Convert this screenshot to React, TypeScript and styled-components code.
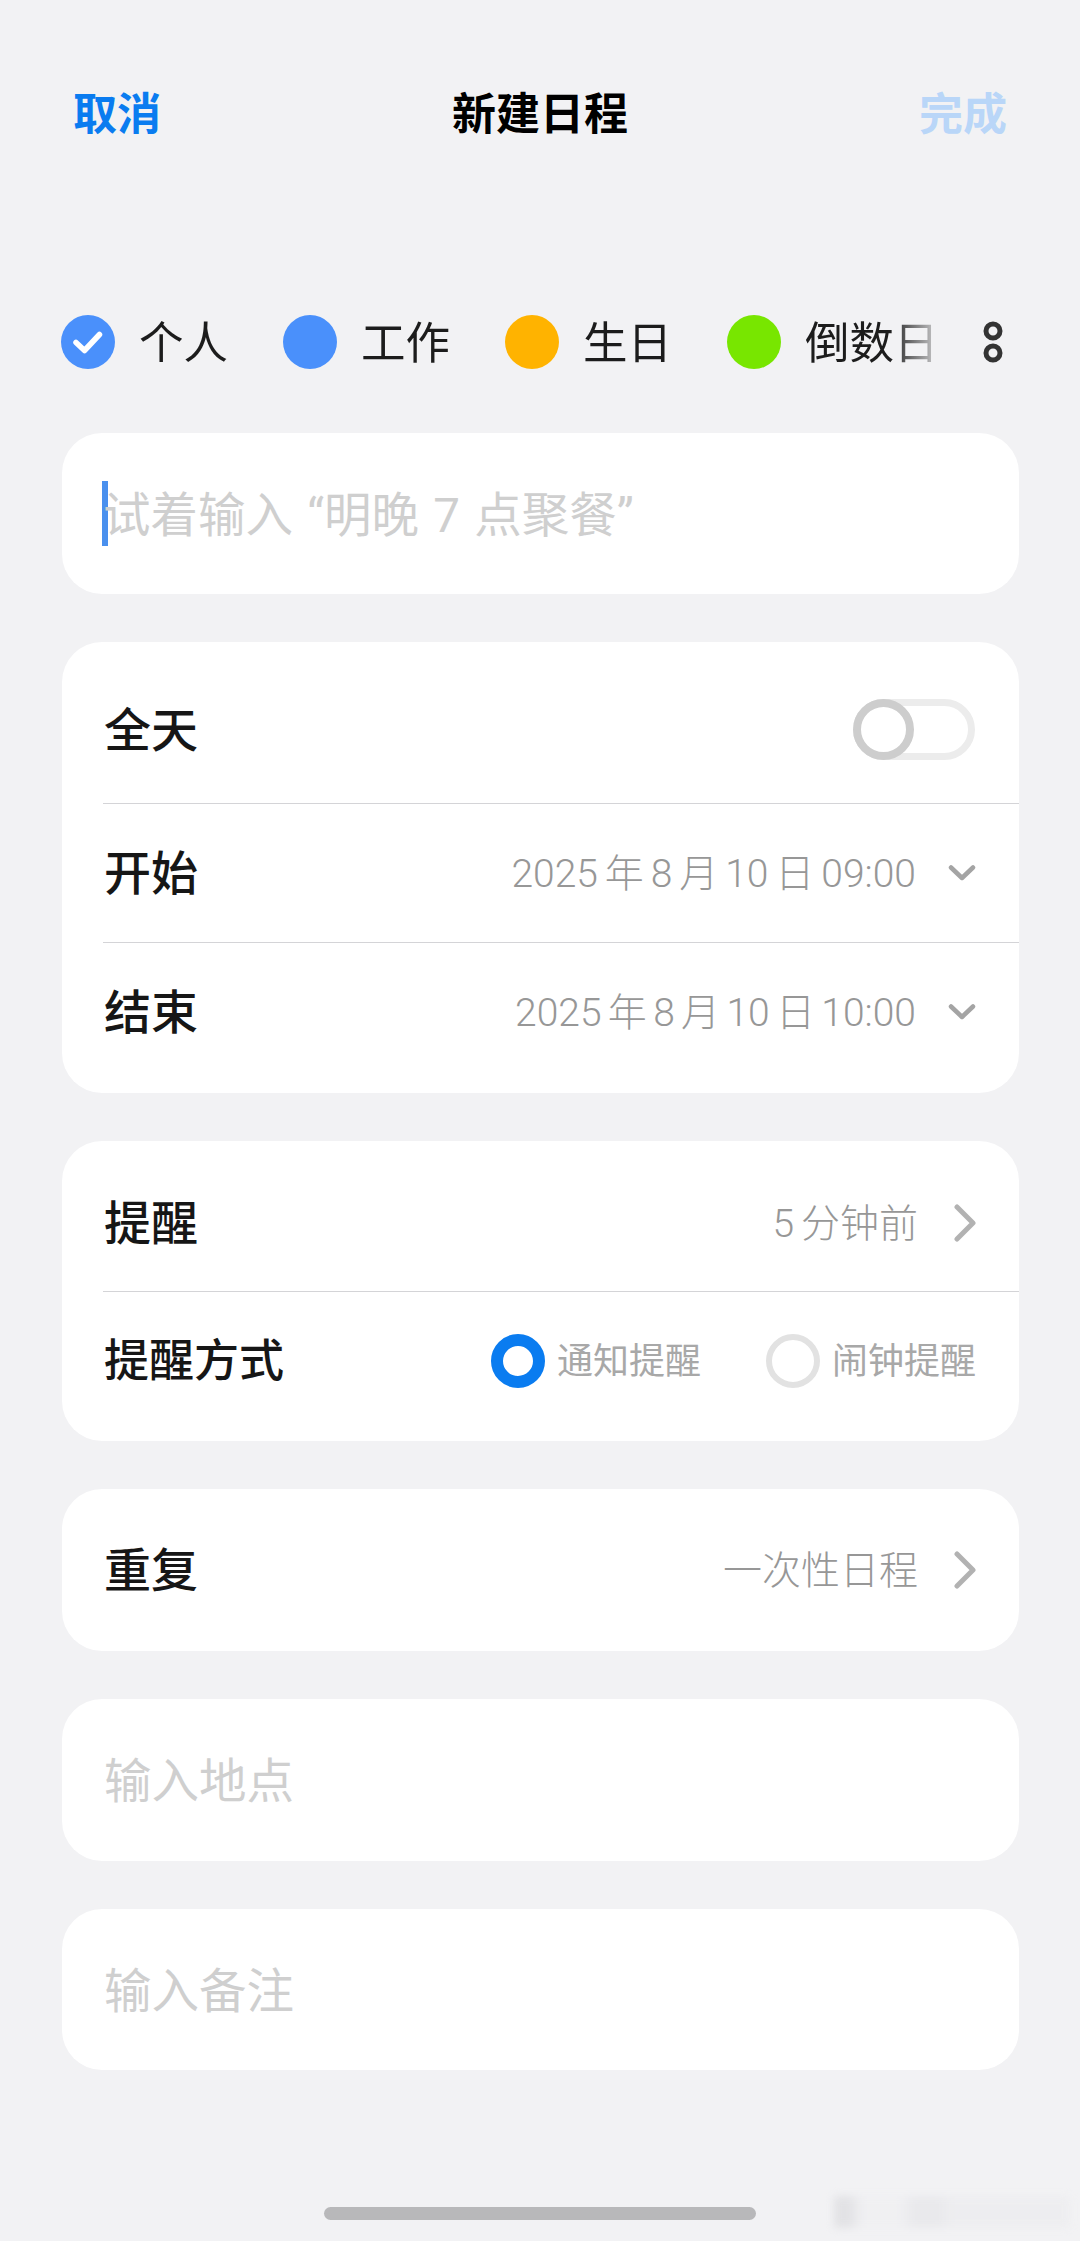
import React from 'react';
import styled, { createGlobalStyle } from 'styled-components';

const GlobalStyle = createGlobalStyle`
  html, body {
    margin: 0;
    padding: 0;
    background: #f2f2f4;
  }
  * {
    box-sizing: border-box;
  }
`;

const FONT = `Roboto, "Noto Sans CJK SC", sans-serif`;

const Page = styled.div`
  position: relative;
  width: 1080px;
  height: 2241px;
  overflow: hidden;
  padding: 85px 61px 0 62px;
  background: #f2f2f4;
  font-family: ${FONT};
  color: #161616;
`;

const Header = styled.header`
  display: flex;
  align-items: center;
  justify-content: space-between;
  height: 56px;
  padding: 0 12px 0 11px;
`;

const HeaderAction = styled.span<{ $muted?: boolean }>`
  padding-top: 3px;
  font-size: 44px;
  line-height: 56px;
  font-weight: 700;
  color: ${(p) => (p.$muted ? '#b9d6f8' : '#0a7cf0')};
`;

const Title = styled.h1`
  margin: 0;
  padding-top: 3px;
  font-size: 44px;
  line-height: 56px;
  font-weight: 700;
  color: #000;
`;

const Categories = styled.div`
  display: flex;
  align-items: center;
  justify-content: space-between;
  height: 54px;
  margin-top: 174px;
  margin-bottom: 64px;
`;

const ChipScroller = styled.div`
  display: flex;
  gap: 55px;
  width: 880px;
  margin-left: -1px;
  overflow: hidden;
  -webkit-mask-image: linear-gradient(to right, #000 828px, rgba(0, 0, 0, 0.25) 872px);
  mask-image: linear-gradient(to right, #000 828px, rgba(0, 0, 0, 0.25) 872px);
`;

const Chip = styled.div`
  display: flex;
  flex: none;
  align-items: center;
  gap: 24px;
`;

const Dot = styled.span<{ $color: string }>`
  display: flex;
  flex: none;
  width: 54px;
  height: 54px;
  border-radius: 50%;
  background: ${(p) => p.$color};
`;

const ChipLabel = styled.span`
  padding-top: 4px;
  font-size: 44.5px;
  line-height: 54px;
  white-space: nowrap;
  color: #1c1c1c;
`;

const MoreIcon = styled.svg`
  flex: none;
  width: 20px;
  height: 42px;
  margin-right: 16px;
`;

const Stack = styled.div`
  display: flex;
  flex-direction: column;
  gap: 48px;
`;

const Card = styled.section`
  overflow: hidden;
  border-radius: 40px;
  background: #fff;
`;

const Row = styled.div<{ $h: number; $top?: number; $bottom?: number; $line?: boolean }>`
  display: flex;
  align-items: center;
  justify-content: space-between;
  height: ${(p) => p.$h}px;
  margin-left: 41px;
  padding: ${(p) => p.$top ?? 0}px 43px ${(p) => p.$bottom ?? 0}px 1px;
  border-top: ${(p) => (p.$line ? '1px solid #d4d4d7' : 'none')};
`;

const Label = styled.span<{ $small?: boolean }>`
  padding-top: 2px;
  font-size: ${(p) => (p.$small ? 45 : 47)}px;
  line-height: 60px;
  font-weight: 500;
  color: #161616;
`;

const Placeholder = styled.span`
  display: flex;
  align-items: center;
  font-size: 47.5px;
  line-height: 60px;
  word-spacing: 2.5px;
  white-space: pre;
  color: #cfcfcf;
`;

const PlaceholderText = styled.span`
  padding-top: 4px;
`;

const Caret = styled.span`
  flex: none;
  width: 6px;
  height: 65px;
  margin-left: -2px;
  margin-right: -5px;
  background: #4a90ee;
`;

const Value = styled.div`
  display: flex;
  align-items: center;
`;

const ValueText = styled.span<{ $tight?: boolean }>`
  padding-top: 2px;
  font-size: 39px;
  line-height: 56px;
  font-weight: 300;
  word-spacing: ${(p) => (p.$tight ? -3.2 : -2.6)}px;
  white-space: nowrap;
  color: #979797;
`;

const ChevronDown = styled.svg`
  flex: none;
  width: 28px;
  height: 18px;
  margin-left: 32px;
`;

const ChevronRight = styled.svg`
  flex: none;
  width: 22px;
  height: 38px;
  margin-left: 36px;
`;

const Toggle = styled.span`
  position: relative;
  display: block;
  width: 122px;
  height: 61px;
  margin-right: 1px;
  border: 7px solid #ececec;
  border-radius: 31px;
`;

const Thumb = styled.span`
  position: absolute;
  top: -7px;
  left: -7px;
  width: 61px;
  height: 61px;
  border: 8px solid #cdcdcd;
  border-radius: 50%;
  background: #fff;
`;

const RadioGroup = styled.div`
  display: flex;
  align-items: center;
  gap: 65px;
`;

const RadioOption = styled.div`
  display: flex;
  align-items: center;
  gap: 12px;
`;

const RadioMark = styled.span<{ $on?: boolean }>`
  flex: none;
  width: 54px;
  height: 54px;
  border-radius: 50%;
  border: ${(p) => (p.$on ? '12px solid #0a7cf0' : '6px solid #e2e2e2')};
`;

const RadioLabel = styled.span`
  padding-top: 3px;
  font-size: 36px;
  line-height: 50px;
  white-space: nowrap;
  color: #a8a8a8;
`;

const HomeBar = styled.div`
  position: absolute;
  left: 324px;
  top: 2207px;
  width: 432px;
  height: 13px;
  border-radius: 7px;
  background: #b8b8ba;
`;

const Watermark = styled.div`
  position: absolute;
  left: 834px;
  top: 2196px;
  width: 236px;
  height: 32px;
  opacity: 0.45;
  filter: blur(4px);
  background: linear-gradient(to right, #cfcfd3 0 6%, #eeeef1 12% 28%, #dfdfe3 34% 44%, #e9e9ec 50% 100%);
`;

const categories = [
  { name: '个人', color: '#4a90fb', checked: true },
  { name: '工作', color: '#4a90fb' },
  { name: '生日', color: '#ffb300' },
  { name: '倒数日', color: '#78e600' },
];

const Down = () => (
  <ChevronDown viewBox="0 0 28 18">
    <path d="M3 3.5 L14 14 L25 3.5" fill="none" stroke="#a4a4a4" strokeWidth="4.5" strokeLinecap="round" strokeLinejoin="round" />
  </ChevronDown>
);

const Right = () => (
  <ChevronRight viewBox="0 0 22 38">
    <path d="M3 3 L19 19 L3 35" fill="none" stroke="#b2b2b2" strokeWidth="5" strokeLinecap="round" strokeLinejoin="round" />
  </ChevronRight>
);

export default function App() {
  return (
    <Page>
      <GlobalStyle />
      <Header>
        <HeaderAction>取消</HeaderAction>
        <Title>新建日程</Title>
        <HeaderAction $muted>完成</HeaderAction>
      </Header>

      <Categories>
        <ChipScroller>
          {categories.map((c) => (
            <Chip key={c.name}>
              <Dot $color={c.color}>
                {c.checked && (
                  <svg width="54" height="54" viewBox="0 0 54 54">
                    <path d="M15 27.5 L23.5 35.5 L38.5 19.5" fill="none" stroke="#fff" strokeWidth="5.5" strokeLinecap="round" strokeLinejoin="round" />
                  </svg>
                )}
              </Dot>
              <ChipLabel>{c.name}</ChipLabel>
            </Chip>
          ))}
        </ChipScroller>
        <MoreIcon viewBox="0 0 20 42">
          <circle cx="10" cy="10" r="7" fill="none" stroke="#333" strokeWidth="5" />
          <circle cx="10" cy="32" r="7" fill="none" stroke="#333" strokeWidth="5" />
        </MoreIcon>
      </Categories>

      <Stack>
        <Card>
          <Row $h={161}>
            <Placeholder>
              <Caret />
              <PlaceholderText>试着输入 “明晚 7 点聚餐”</PlaceholderText>
            </Placeholder>
          </Row>
        </Card>

        <Card>
          <Row $h={161} $top={14}>
            <Label>全天</Label>
            <Toggle>
              <Thumb />
            </Toggle>
          </Row>
          <Row $h={139} $line>
            <Label>开始</Label>
            <Value>
              <ValueText>2025 年 8 月 10 日 09:00</ValueText>
              <Down />
            </Value>
          </Row>
          <Row $h={151} $bottom={12} $line>
            <Label>结束</Label>
            <Value>
              <ValueText $tight>2025 年 8 月 10 日 10:00</ValueText>
              <Down />
            </Value>
          </Row>
        </Card>

        <Card>
          <Row $h={150} $top={14}>
            <Label>提醒</Label>
            <Value>
              <ValueText>5 分钟前</ValueText>
              <Right />
            </Value>
          </Row>
          <Row $h={150} $bottom={12} $line>
            <Label $small>提醒方式</Label>
            <RadioGroup>
              <RadioOption>
                <RadioMark $on />
                <RadioLabel>通知提醒</RadioLabel>
              </RadioOption>
              <RadioOption>
                <RadioMark />
                <RadioLabel>闹钟提醒</RadioLabel>
              </RadioOption>
            </RadioGroup>
          </Row>
        </Card>

        <Card>
          <Row $h={162}>
            <Label>重复</Label>
            <Value>
              <ValueText>一次性日程</ValueText>
              <Right />
            </Value>
          </Row>
        </Card>

        <Card>
          <Row $h={162}>
            <Placeholder>
              <PlaceholderText>输入地点</PlaceholderText>
            </Placeholder>
          </Row>
        </Card>

        <Card>
          <Row $h={161}>
            <Placeholder>
              <PlaceholderText>输入备注</PlaceholderText>
            </Placeholder>
          </Row>
        </Card>
      </Stack>

      <HomeBar />
      <Watermark />
    </Page>
  );
}
